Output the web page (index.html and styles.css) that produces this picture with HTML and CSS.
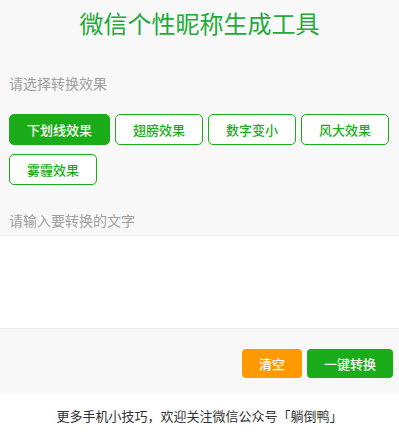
FILE: index.html
```html
<!DOCTYPE html>
<html lang="zh-CN">
<head>
<meta charset="utf-8">
<title>微信个性昵称生成工具</title>
<link rel="stylesheet" href="styles.css">
</head>
<body>
<div class="page">
  <h1 class="title">微信个性昵称生成工具</h1>
  <div class="label label-first">请选择转换效果</div>
  <div class="options">
    <button class="opt opt-active">下划线效果</button>
    <button class="opt">翅膀效果</button>
    <button class="opt">数字变小</button>
    <button class="opt">风大效果</button>
    <button class="opt">雾霾效果</button>
  </div>
  <div class="label label-second">请输入要转换的文字</div>
  <textarea class="input"></textarea>
  <div class="actions">
    <button class="act act-clear">清空</button>
    <button class="act act-convert">一键转换</button>
  </div>
</div>
<footer class="footer">更多手机小技巧，欢迎关注微信公众号「躺倒鸭」</footer>
</body>
</html>
```
FILE: styles.css
```css
html, body {
  margin: 0;
  padding: 0;
  background: #ffffff;
  font-family: "Noto Sans CJK SC", "Noto Sans", sans-serif;
}
.page {
  background: #f8f8f8;
  display: flex;
  flex-direction: column;
}
.title {
  margin: 0;
  padding-top: 6px;
  font-size: 24px;
  line-height: 34px;
  font-weight: normal;
  color: #22ab3a;
  text-align: center;
}
.label {
  font-size: 14px;
  line-height: 20px;
  color: #a0a0a0;
  padding: 0 9px;
}
.label-first { margin-top: 33px; }
.label-second { margin-top: 25px; }
.options {
  margin-top: 21px;
  padding: 0 9px;
  display: flex;
  flex-wrap: wrap;
  gap: 9px 5px;
}
.opt {
  height: 31px;
  padding: 0 17px;
  border: 1px solid #1aad19;
  border-radius: 5px;
  background: #ffffff;
  color: #1aad19;
  font-family: inherit;
  font-size: 13px;
  font-weight: 500;
  line-height: 29px;
}
.opt-active {
  background: #1aad19;
  color: #ffffff;
}
.input {
  display: block;
  margin-top: 5px;
  height: 94px;
  box-sizing: border-box;
  width: 100%;
  border: none;
  border-top: 1px solid #eeeeee;
  border-bottom: 1px solid #eeeeee;
  background: #ffffff;
  resize: none;
  outline: none;
}
.actions {
  display: flex;
  justify-content: flex-end;
  gap: 5px;
  padding: 20px 6px 15px;
}
.act {
  height: 29px;
  padding: 0 17px;
  border: none;
  border-radius: 4px;
  color: #ffffff;
  font-family: inherit;
  font-size: 13px;
  font-weight: 500;
}
.act-clear { background: #ff9900; }
.act-convert { background: #1aad19; }
.footer {
  height: 46px;
  line-height: 46px;
  text-align: center;
  font-size: 13px;
  color: #333333;
}
```
